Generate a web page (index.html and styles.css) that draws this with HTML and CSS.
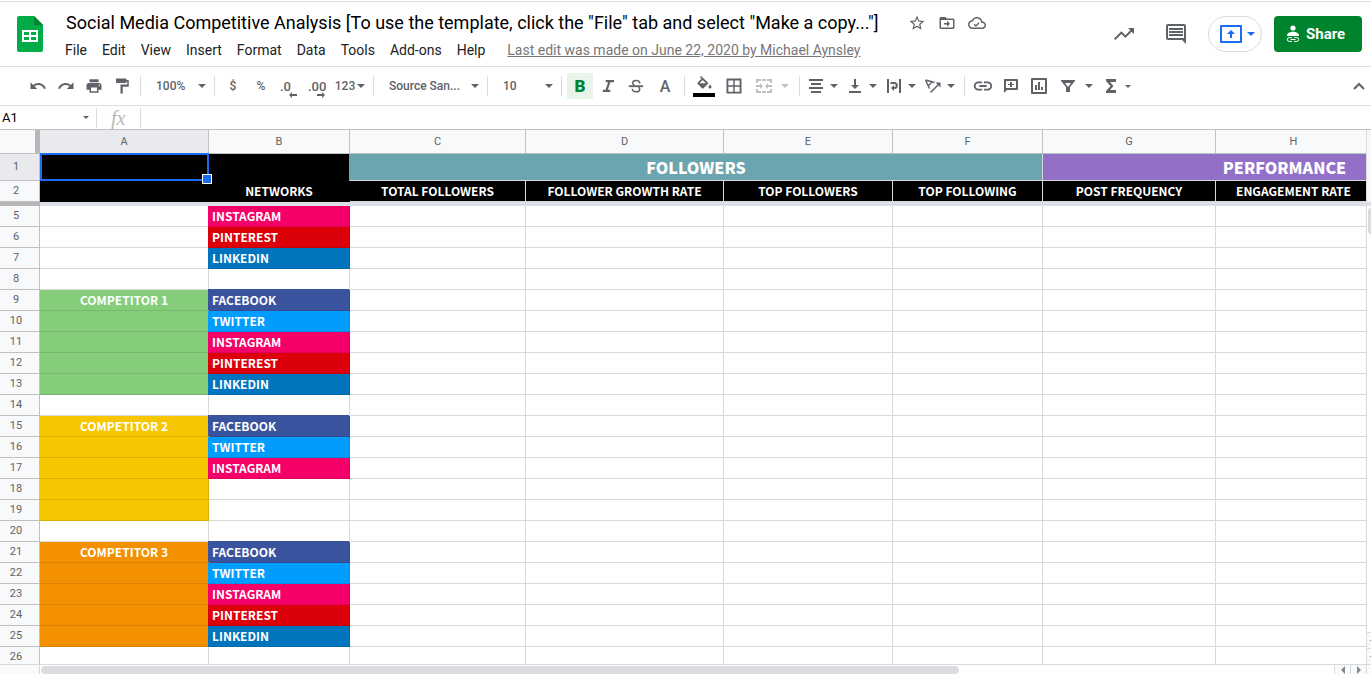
FILE: index.html
```html
<!DOCTYPE html>
<html lang="en">
<head>
    <meta charset="UTF-8">
    <meta name="viewport" content="width=device-width, initial-scale=1.0">
    <title>Social Media Competitive Analysis</title>
    <link rel="stylesheet" href="styles.css">
</head>
<body>
    <header class="header">
        <a class="logo" href="#" aria-label="Sheets home">
            <svg width="26" height="36" viewBox="0 0 26 36">
                <path fill="#00ac47" d="M2 0h15l9 9v25a2 2 0 0 1-2 2H2a2 2 0 0 1-2-2V2a2 2 0 0 1 2-2z"/>
                <path fill="#00832d" d="M17 0l9 9h-9z"/>
                <path fill="#fff" fill-rule="evenodd" d="M5 14h16v12H5zM7 16v3h5v-3zM14 16v3h5v-3zM7 21v3h5v-3zM14 21v3h5v-3z"/>
            </svg>
        </a>
        <div class="titles">
            <div class="title-row">
                <h1>Social Media Competitive Analysis [To use the template, click the "File" tab and select "Make a copy..."]</h1>
                <button class="doc-btn" aria-label="Star">
                    <svg width="18" height="18" viewBox="0 0 24 24"><path d="M22 9.24l-7.19-.62L12 2 9.19 8.63 2 9.24l5.46 4.73L5.82 21 12 17.27 18.18 21l-1.63-7.03L22 9.24zM12 15.4l-3.76 2.27 1-4.28-3.32-2.88 4.38-.38L12 6.1l1.71 4.04 4.38.38-3.32 2.88 1 4.28L12 15.4z"/></svg>
                </button>
                <button class="doc-btn" aria-label="Move">
                    <svg width="18" height="18" viewBox="0 0 24 24"><path d="M20 6h-8l-2-2H4c-1.1 0-2 .9-2 2v12c0 1.1.9 2 2 2h16c1.1 0 2-.9 2-2V8c0-1.1-.9-2-2-2zm0 12H4V8h16v10zm-8-1l4-4-4-4v3H8v2h4z"/></svg>
                </button>
                <button class="doc-btn" aria-label="Saved to Drive">
                    <svg width="18" height="18" viewBox="0 0 24 24"><path d="M19.35 10.04C18.67 6.59 15.64 4 12 4 9.11 4 6.6 5.64 5.35 8.04 2.34 8.36 0 10.91 0 14c0 3.31 2.69 6 6 6h13c2.76 0 5-2.24 5-5 0-2.64-2.05-4.78-4.65-4.96zM19 18H6c-2.21 0-4-1.79-4-4s1.79-4 4-4h.71C7.37 7.69 9.48 6 12 6c3.04 0 5.5 2.46 5.5 5.5v.5H19c1.66 0 3 1.34 3 3s-1.34 3-3 3zm-8.5-3.4l-1.6-1.6-1.3 1.3 2.9 2.9 4.9-4.9-1.3-1.3z"/></svg>
                </button>
            </div>
            <nav class="menu">
                <button>File</button>
                <button>Edit</button>
                <button>View</button>
                <button>Insert</button>
                <button>Format</button>
                <button>Data</button>
                <button>Tools</button>
                <button>Add-ons</button>
                <button>Help</button>
                <a class="last-edit" href="#">Last edit was made on June 22, 2020 by Michael Aynsley</a>
            </nav>
        </div>
        <div class="actions">
            <button class="action-btn" aria-label="Activity">
                <svg width="24" height="24" viewBox="0 0 24 24"><path d="M16 6l2.29 2.29-4.88 4.88-4-4L2 16.59 3.41 18l6-6 4 4 6.3-6.29L22 12V6z"/></svg>
            </button>
            <button class="action-btn" aria-label="Comments">
                <svg width="24" height="24" viewBox="0 0 24 24"><path fill-rule="evenodd" d="M22 4c0-1.1-.9-2-2-2H4c-1.1 0-2 .9-2 2v12c0 1.1.9 2 2 2h14l4 4V4zM20 16H4V4h16zM5 12h14v2H5zM5 9h14v2H5zM5 6h14v2H5z"/></svg>
            </button>
            <button class="present" aria-label="Present">
                <svg width="22" height="18" viewBox="0 0 22 18"><path fill-rule="evenodd" d="M0 1a1 1 0 0 1 1-1h20a1 1 0 0 1 1 1v16a1 1 0 0 1-1 1H1a1 1 0 0 1-1-1zM2 2v14h18V2zM10 13V9H7l4-4 4 4h-3v4z"/></svg>
                <span class="caret"></span>
            </button>
            <button class="share">
                <svg width="14" height="18" viewBox="0 0 14 18"><circle cx="7" cy="3" r="2.6"/><path d="M1 11c0-3 3-4.3 6-4.3s6 1.3 6 4.3z"/><path class="line" d="M6 12.6H3.2a1.9 1.9 0 0 0 0 3.8H6M8 12.6h2.8a1.9 1.9 0 0 1 0 3.8H8M4.5 14.5h5"/></svg>
                Share
            </button>
        </div>
    </header>

    <div class="toolbar">
        <button aria-label="Undo"><svg width="18" height="18" viewBox="0 0 24 24"><path d="M12.5 8c-2.65 0-5.05.99-6.9 2.6L2 7v9h9l-3.62-3.62c1.39-1.16 3.16-1.88 5.12-1.88 3.54 0 6.55 2.31 7.6 5.5l2.37-.78C21.08 11.03 17.15 8 12.5 8z"/></svg></button>
        <button aria-label="Redo"><svg width="18" height="18" viewBox="0 0 24 24"><path d="M18.4 10.6C16.55 8.99 14.15 8 11.5 8c-4.65 0-8.58 3.03-9.96 7.22L3.9 16c1.05-3.19 4.05-5.5 7.6-5.5 1.95 0 3.73.72 5.12 1.88L13 16h9V7l-3.6 3.6z"/></svg></button>
        <button aria-label="Print"><svg width="18" height="18" viewBox="0 0 24 24"><path d="M19 8H5c-1.66 0-3 1.34-3 3v6h4v4h12v-4h4v-6c0-1.66-1.34-3-3-3zm-3 11H8v-5h8v5zm3-7c-.55 0-1-.45-1-1s.45-1 1-1 1 .45 1 1-.45 1-1 1zm-1-9H6v4h12V3z"/></svg></button>
        <button aria-label="Paint format"><svg width="18" height="18" viewBox="0 0 24 24"><path d="M18 4V3c0-.55-.45-1-1-1H5c-.55 0-1 .45-1 1v4c0 .55.45 1 1 1h12c.55 0 1-.45 1-1V6h1v4H10v12h3v-9h8V4h-3z"/></svg></button>
        <span class="sep"></span>
        <span class="picker"><select aria-label="Zoom"><option>100%</option></select><span class="caret"></span></span>
        <span class="sep"></span>
        <button aria-label="Currency">$</button>
        <button aria-label="Percent">%</button>
        <button class="decimal" aria-label="Decrease decimal places">.0<svg width="8" height="6" viewBox="0 0 8 6"><path d="M0 3l3-3v2h5v2H3v2z"/></svg></button>
        <button class="decimal" aria-label="Increase decimal places">.00<svg width="8" height="6" viewBox="0 0 8 6"><path d="M8 3L5 0v2H0v2h5v2z"/></svg></button>
        <button class="number-format">123<span class="caret"></span></button>
        <span class="sep"></span>
        <span class="picker font"><select aria-label="Font"><option>Source San...</option></select><span class="caret"></span></span>
        <span class="sep"></span>
        <span class="picker"><select aria-label="Font size"><option>10</option></select><span class="caret"></span></span>
        <span class="sep"></span>
        <button class="bold" aria-label="Bold">B</button>
        <button aria-label="Italic"><svg width="18" height="18" viewBox="0 0 24 24"><path d="M9 4v3h3.2L8.8 17H5v3h10v-3h-3.2l3.4-10H20V4z"/></svg></button>
        <button aria-label="Strikethrough"><svg width="18" height="18" viewBox="0 0 24 24"><path d="M2.5 11h19v2.5h-19z"/><path class="thick" d="M17 8.5C17 6 15 4.5 12.3 4.5S7.5 5.8 7.5 8c0 1.5 1 2.5 2.5 3M15 13.5c1.5.7 2 1.5 2 2.7 0 2.2-2 3.5-4.6 3.5S7 18.4 7 15.8"/></svg></button>
        <button class="text-color" aria-label="Text color">A</button>
        <span class="sep"></span>
        <button class="fill-color" aria-label="Fill color"><svg width="22" height="22" viewBox="0 0 22 22"><path fill-rule="evenodd" d="M8 1l6.8 6.5a1 1 0 0 1 0 1.5l-4.3 4.3a1 1 0 0 1-1.5 0L4.7 9a1 1 0 0 1 0-1.5L8.5 3.7 7 2.2zM9.7 5L6.5 8.2h6.3z"/><path d="M17 9.5s1.5 1.7 1.5 2.6a1.5 1.5 0 0 1-3 0c0-.9 1.5-2.6 1.5-2.6z"/><path fill="#000" d="M0 18h22v4H0z"/></svg></button>
        <button class="wide" aria-label="Borders"><svg width="18" height="18" viewBox="0 0 24 24"><path fill-rule="evenodd" d="M2 2v20h20V2H2zM11 19.5H4.5V13H11zM11 11H4.5V4.5H11zM19.5 19.5H13V13h6.5zM19.5 11H13V4.5h6.5z"/></svg></button>
        <button class="drop spaced" aria-label="Merge cells" disabled><svg width="18" height="18" viewBox="0 0 18 18"><path d="M1 2h5v2H3v2H1zM7 2h4v2H7zM12 2h5v4h-2V4h-3zM1 12h2v2h3v2H1zM7 14h4v2H7zM15 12h2v4h-5v-2h3zM1 8h4V6l3 3-3 3v-2H1zM17 8h-4V6l-3 3 3 3v-2h4z"/></svg><span class="caret"></span></button>
        <span class="sep"></span>
        <button class="drop" aria-label="Horizontal align"><svg width="18" height="18" viewBox="0 0 18 18"><path d="M2 2h14v2H2zM4 6h10v2H4zM2 10h14v2H2zM4 14h10v2H4z"/></svg><span class="caret"></span></button>
        <button class="drop" aria-label="Vertical align"><svg width="18" height="18" viewBox="0 0 18 18"><path d="M8 2h2v6h3l-4 4-4-4h3zM3 14h12v2H3z"/></svg><span class="caret"></span></button>
        <button class="drop" aria-label="Text wrapping"><svg width="18" height="18" viewBox="0 0 18 18"><path d="M2 2h2v14H2zM14 2h2v14h-2zM9 8v6l-3-3z"/><path class="thick" d="M5.5 6h3.8a2.5 2.5 0 0 1 0 5H8"/></svg><span class="caret"></span></button>
        <button class="drop" aria-label="Text rotation"><svg width="18" height="18" viewBox="0 0 18 18"><path class="stroke" d="M1.5 3l9 2.500M1.5 3l4 8.5M4 9l4.5-4.5M6.5 15.5l8-8"/><path d="M11.5 5.5h5v5z"/></svg><span class="caret"></span></button>
        <span class="sep"></span>
        <button aria-label="Insert link"><svg width="22" height="22" viewBox="0 0 24 24"><path d="M3.9 12c0-1.71 1.39-3.1 3.1-3.1h4V7H7c-2.76 0-5 2.24-5 5s2.24 5 5 5h4v-1.9H7c-1.71 0-3.1-1.39-3.1-3.1zM8 13h8v-2H8v2zm9-6h-4v1.9h4c1.71 0 3.1 1.39 3.1 3.1s-1.39 3.1-3.1 3.1h-4V17h4c2.76 0 5-2.24 5-5s-2.24-5-5-5z"/></svg></button>
        <button aria-label="Insert comment"><svg width="18" height="18" viewBox="0 0 18 18"><path fill-rule="evenodd" d="M2 2h13a1 1 0 0 1 1 1v9a1 1 0 0 1-1 1H5l-3 3zM4 4v7h10V4zM8 5h2v2h2v1h-2v2H8V8H6V7h2z"/></svg></button>
        <button aria-label="Insert chart"><svg width="18" height="18" viewBox="0 0 18 18"><path fill-rule="evenodd" d="M2 1h14a1 1 0 0 1 1 1v14a1 1 0 0 1-1 1H2a1 1 0 0 1-1-1V2a1 1 0 0 1 1-1zM3 3v12h12V3zM5 8h2v5H5zM8 5h2v8H8zM11 10h2v3h-2z"/></svg></button>
        <button class="drop spaced" aria-label="Filter"><svg width="18" height="18" viewBox="0 0 18 18"><path fill-rule="evenodd" d="M2 3h14v1l-5 6v5H7v-5L2 4zM6 6l3 4 3-4z"/></svg><span class="caret"></span></button>
        <button class="drop" aria-label="Functions"><svg width="18" height="18" viewBox="0 0 18 18"><path d="M4 2h10v3H8l3.5 4L8 13h6v3H4v-2l4.500-5L4 4z"/></svg><span class="caret small"></span></button>
        <button class="collapse" aria-label="Hide the menus"><svg width="18" height="18" viewBox="0 0 18 18"><path class="thick" d="M4 12l5-5 5 5"/></svg></button>
    </div>

    <div class="formula-bar">
        <input class="name-box" aria-label="Name box" value="A1">
        <span class="caret small"></span>
        <span class="sep"></span>
        <label class="fx" for="formula">fx</label>
        <span class="sep"></span>
        <input id="formula" class="formula">
    </div>

    <main class="sheet">
        <div class="grid">
            <table>
                <colgroup>
                    <col class="col-rows">
                    <col class="col-a">
                    <col class="col-b">
                    <col class="col-c">
                    <col class="col-d">
                    <col class="col-e">
                    <col class="col-f">
                    <col class="col-g">
                    <col class="col-h">
                    <col class="col-i">
                </colgroup>
                <thead>
                    <tr class="letters"><th class="corner"></th><th class="active">A</th><th>B</th><th>C</th><th>D</th><th>E</th><th>F</th><th>G</th><th>H</th><th></th></tr>
                </thead>
                <tbody>
                    <tr class="groups"><th class="active">1</th><td class="black selected"><span class="selection"></span></td><td class="black"></td><td class="followers" colspan="4">FOLLOWERS</td><td class="performance" colspan="3">PERFORMANCE</td></tr>
                    <tr class="headings"><th>2</th><td class="black"></td><td class="black">NETWORKS</td><td>TOTAL FOLLOWERS</td><td>FOLLOWER GROWTH RATE</td><td>TOP FOLLOWERS</td><td>TOP FOLLOWING</td><td>POST FREQUENCY</td><td>ENGAGEMENT RATE</td><td></td></tr>
                    <tr class="freeze"><th></th><td colspan="9"></td></tr>
                    <tr><th>5</th><td></td><td class="instagram">INSTAGRAM</td><td></td><td></td><td></td><td></td><td></td><td></td><td></td></tr>
                    <tr><th>6</th><td></td><td class="pinterest">PINTEREST</td><td></td><td></td><td></td><td></td><td></td><td></td><td></td></tr>
                    <tr><th>7</th><td></td><td class="linkedin">LINKEDIN</td><td></td><td></td><td></td><td></td><td></td><td></td><td></td></tr>
                    <tr><th>8</th><td></td><td></td><td></td><td></td><td></td><td></td><td></td><td></td><td></td></tr>
                    <tr><th>9</th><td class="green">COMPETITOR 1</td><td class="facebook">FACEBOOK</td><td></td><td></td><td></td><td></td><td></td><td></td><td></td></tr>
                    <tr><th>10</th><td class="green"></td><td class="twitter">TWITTER</td><td></td><td></td><td></td><td></td><td></td><td></td><td></td></tr>
                    <tr><th>11</th><td class="green"></td><td class="instagram">INSTAGRAM</td><td></td><td></td><td></td><td></td><td></td><td></td><td></td></tr>
                    <tr><th>12</th><td class="green"></td><td class="pinterest">PINTEREST</td><td></td><td></td><td></td><td></td><td></td><td></td><td></td></tr>
                    <tr><th>13</th><td class="green"></td><td class="linkedin">LINKEDIN</td><td></td><td></td><td></td><td></td><td></td><td></td><td></td></tr>
                    <tr><th>14</th><td></td><td></td><td></td><td></td><td></td><td></td><td></td><td></td><td></td></tr>
                    <tr><th>15</th><td class="yellow">COMPETITOR 2</td><td class="facebook">FACEBOOK</td><td></td><td></td><td></td><td></td><td></td><td></td><td></td></tr>
                    <tr><th>16</th><td class="yellow"></td><td class="twitter">TWITTER</td><td></td><td></td><td></td><td></td><td></td><td></td><td></td></tr>
                    <tr><th>17</th><td class="yellow"></td><td class="instagram">INSTAGRAM</td><td></td><td></td><td></td><td></td><td></td><td></td><td></td></tr>
                    <tr><th>18</th><td class="yellow"></td><td></td><td></td><td></td><td></td><td></td><td></td><td></td><td></td></tr>
                    <tr><th>19</th><td class="yellow"></td><td></td><td></td><td></td><td></td><td></td><td></td><td></td><td></td></tr>
                    <tr><th>20</th><td></td><td></td><td></td><td></td><td></td><td></td><td></td><td></td><td></td></tr>
                    <tr><th>21</th><td class="orange">COMPETITOR 3</td><td class="facebook">FACEBOOK</td><td></td><td></td><td></td><td></td><td></td><td></td><td></td></tr>
                    <tr><th>22</th><td class="orange"></td><td class="twitter">TWITTER</td><td></td><td></td><td></td><td></td><td></td><td></td><td></td></tr>
                    <tr><th>23</th><td class="orange"></td><td class="instagram">INSTAGRAM</td><td></td><td></td><td></td><td></td><td></td><td></td><td></td></tr>
                    <tr><th>24</th><td class="orange"></td><td class="pinterest">PINTEREST</td><td></td><td></td><td></td><td></td><td></td><td></td><td></td></tr>
                    <tr><th>25</th><td class="orange"></td><td class="linkedin">LINKEDIN</td><td></td><td></td><td></td><td></td><td></td><td></td><td></td></tr>
                    <tr><th>26</th><td></td><td></td><td></td><td></td><td></td><td></td><td></td><td></td><td></td></tr>
                </tbody>
            </table>
        </div>
        <div class="vscroll">
            <div class="vscroll-top"></div>
            <div class="vscroll-track"><div class="vscroll-thumb"></div></div>
            <button aria-label="Scroll up"><span></span></button>
            <button aria-label="Scroll down"><span></span></button>
        </div>
        <div class="hscroll">
            <div class="hscroll-corner"></div>
            <div class="hscroll-track"><div class="hscroll-thumb"></div></div>
            <button aria-label="Scroll left"><svg width="4" height="8" viewBox="0 0 4 8"><path d="M4 0v8L0 4z"/></svg></button>
            <button aria-label="Scroll right"><svg width="4" height="8" viewBox="0 0 4 8"><path d="M0 0v8l4-4z"/></svg></button>
        </div>
        <div class="scroll-end"></div>
    </main>
</body>
</html>
```
FILE: styles.css
```css
* {
    box-sizing: border-box;
}

body {
    margin: 0;
    height: 100vh;
    display: flex;
    flex-direction: column;
    overflow: hidden;
    background-color: white;
    color: #000;
    font-family: Roboto, Arial, sans-serif;
}

button, select, input {
    margin: 0;
    padding: 0;
    border: none;
    background: none;
    font: inherit;
    color: inherit;
}

button {
    cursor: pointer;
}

svg {
    display: block;
    flex: none;
    fill: currentColor;
}

.stroke, .thick, .line {
    fill: none;
    stroke: currentColor;
    stroke-width: 1.5;
}

.thick {
    stroke-width: 2;
}

.line {
    stroke-width: 1;
}

.caret {
    width: 8px;
    border: 4px solid transparent;
    border-top-color: currentColor;
    border-bottom: none;
    pointer-events: none;
}

.caret.small {
    width: 6px;
    border-width: 3px;
    border-bottom: none;
}

/* header */
.header {
    display: flex;
    height: 66px;
    margin-top: 1px;
    padding: 0 9px 0 17px;
    border-top: 1px solid #dadce0;
    border-bottom: 1px solid #dadce0;
}

.logo {
    margin-top: 14px;
}

.titles {
    flex: 1;
    min-width: 0;
    padding: 8px 0 0 15px;
}

.title-row {
    display: flex;
    align-items: center;
    height: 26px;
}

.title-row h1 {
    margin: 0 24px 0 8px;
    font-size: 18px;
    font-weight: 400;
    line-height: 26px;
    white-space: nowrap;
}

.doc-btn {
    display: flex;
    justify-content: center;
    width: 30px;
    color: #5f6368;
}

.menu {
    display: flex;
    align-items: center;
    gap: 1px;
    height: 28px;
    font-size: 14px;
    color: #202124;
    white-space: nowrap;
}

.menu button {
    padding: 0 7px;
}

.last-edit {
    margin-left: 14px;
    color: #777;
}

.actions {
    display: flex;
    align-items: center;
    gap: 12px;
    height: 64px;
}

.action-btn {
    display: flex;
    justify-content: center;
    width: 40px;
    color: #5f6368;
}

.present {
    display: flex;
    align-items: center;
    gap: 5px;
    height: 36px;
    padding: 0 6px 0 11px;
    border: 1px solid #dadce0;
    border-radius: 18px;
    color: #1a6cf0;
}

.share {
    display: flex;
    align-items: center;
    gap: 6px;
    width: 88px;
    height: 36px;
    padding-left: 12px;
    border-radius: 4px;
    background-color: #00832d;
    color: white;
    font-size: 15px;
    font-weight: 700;
}

/* toolbar */
.toolbar {
    display: flex;
    align-items: center;
    height: 39px;
    padding-left: 24px;
    border-bottom: 1px solid #dadce0;
    color: #5f6368;
    font-size: 12px;
    font-weight: 500;
}

.toolbar button {
    display: flex;
    align-items: center;
    justify-content: center;
    flex: none;
    width: 28px;
    height: 26px;
}

.toolbar button:disabled {
    color: #bdc1c6;
}

.toolbar .sep {
    flex: none;
    width: 1px;
    height: 20px;
    margin: 0 4px;
    background-color: #dadce0;
}

.picker {
    display: flex;
    align-items: center;
    width: 65px;
    padding-right: 4px;
}

.picker select {
    flex: 1;
    min-width: 0;
    padding-left: 11px;
    appearance: none;
}

.picker.font {
    width: 105px;
}

.toolbar .decimal {
    flex-direction: column;
    align-items: flex-start;
    padding: 4px 0 0 5px;
    font-size: 13px;
    line-height: 16px;
}

.decimal svg {
    align-self: flex-end;
    margin-top: -3px;
    margin-right: 6px;
}

.toolbar .number-format {
    gap: 2px;
    width: 38px;
}

.toolbar .bold {
    width: 26px;
    margin: 0 1px;
    border-radius: 2px;
    background-color: #e6f4ea;
    color: #00832d;
    font-size: 17px;
    font-weight: 900;
}

.toolbar .text-color {
    width: 30px;
    font-size: 16px;
}

.toolbar .fill-color, .toolbar .wide {
    width: 30px;
}

.toolbar .drop {
    justify-content: flex-start;
    gap: 5px;
    width: 39px;
    padding-left: 3px;
}

.toolbar .drop.spaced {
    gap: 8px;
    width: 46px;
    padding-left: 6px;
}

.toolbar .collapse {
    margin-left: auto;
    margin-right: -2px;
}

/* formula bar */
.formula-bar {
    display: flex;
    align-items: center;
    height: 24px;
    border-bottom: 1px solid #c0c0c0;
    color: #5f6368;
}

.name-box {
    width: 83px;
    padding-left: 2px;
    color: #000;
    font-size: 13px;
}

.formula-bar .sep {
    width: 1px;
    height: 20px;
    margin-left: 7px;
    background-color: #dadce0;
}

.fx {
    width: 36px;
    padding-left: 14px;
    color: #b7b7b7;
    font-family: "Liberation Serif", serif;
    font-size: 20px;
    font-style: italic;
    line-height: 22px;
}

.formula {
    flex: 1;
    padding: 0 6px;
    font-size: 13px;
}

/* sheet */
.sheet {
    flex: 1;
    min-height: 0;
    display: grid;
    grid-template-columns: minmax(0, 1fr) 5px;
    grid-template-rows: minmax(0, 1fr) 10px;
}

.grid {
    overflow: hidden;
}

table {
    width: 1527px;
    table-layout: fixed;
    border-collapse: separate;
    border-spacing: 0;
}

.col-rows { width: 40px; }
.col-a { width: 169px; }
.col-b { width: 141px; }
.col-c { width: 176px; }
.col-d { width: 198px; }
.col-e { width: 169px; }
.col-f { width: 150px; }
.col-g { width: 173px; }
.col-h { width: 156px; }
.col-i { width: 155px; }

th, td {
    height: 21px;
    padding: 0;
    border-right: 1px solid #d9d9d9;
    border-bottom: 1px solid #d9d9d9;
    white-space: nowrap;
}

th {
    border-color: #c0c0c0;
    padding-right: 7px;
    background-color: #f8f9fa;
    color: #5f6368;
    font-size: 11px;
    font-weight: 400;
    line-height: 12px;
}

td {
    color: white;
    font-family: "Noto Sans CJK SC", "Source Sans Pro", sans-serif;
    font-size: 12px;
    font-weight: 700;
    line-height: 20px;
}

th.active {
    background-color: #e8eaed;
}

.letters th {
    height: 24px;
    padding: 0;
}

.letters .corner {
    border-right: 5px solid #b7b7b7;
}

.groups th, .groups td {
    height: 27px;
}

.groups td {
    font-size: 16px;
    font-weight: 900;
    line-height: 26px;
    text-align: center;
}

.headings td {
    background-color: #000;
    text-align: center;
}

td.black {
    background-color: #000;
    border-color: #000;
}

td.followers {
    background-color: #6aa5b0;
    box-shadow: -1px 0 #6aa5b0;
}

.performance {
    background-color: #9370c8;
}

.freeze th, .freeze td {
    height: 4px;
    border: none;
    background-color: #dadfe8;
    line-height: 0;
}

.freeze th {
    background-color: #b7b7b7;
}

/* active cell outline, drawn over the neighbouring borders */
.selected {
    position: relative;
}

.selection {
    position: absolute;
    z-index: 1;
    inset: -1px -1px -1px 0;
    border: 2px solid #1a6cf0;
}

.selection::after {
    content: "";
    position: absolute;
    right: -5px;
    bottom: -5px;
    width: 8px;
    height: 8px;
    border: 1px solid white;
    background-color: #1a6cf0;
}

.facebook, .twitter, .instagram, .pinterest, .linkedin {
    padding-left: 3px;
}

.facebook {
    background-color: #39539e;
    border-color: #344b90;
    box-shadow: -1px -1px #39539e;
}

.twitter {
    background-color: #009dff;
    border-color: #008ee6;
    box-shadow: -1px 0 #009dff;
}

.instagram {
    background-color: #f50068;
    border-color: #dd005e;
    box-shadow: -1px 0 #f50068;
}

.pinterest {
    background-color: #db000a;
    border-color: #c50009;
    box-shadow: -1px 0 #db000a;
}

.linkedin {
    background-color: #0074bd;
    border-color: #0068aa;
    box-shadow: -1px 0 #0074bd;
}

.green, .yellow, .orange {
    text-align: center;
}

.green {
    background-color: #85cd7a;
    border-color: #78b86e;
}

.yellow {
    background-color: #f7c600;
    border-color: #deb200;
}

.orange {
    background-color: #f39000;
    border-color: #da8200;
}

/* scrollbars */
.vscroll {
    display: flex;
    flex-direction: column;
    overflow: hidden;
    border-left: 1px solid #d9d9d9;
}

.vscroll-top {
    height: 76px;
    border-bottom: 4px solid #dadfe8;
    background-color: #f8f9fa;
}

.vscroll-track {
    flex: 1;
    padding: 2px 0 0 1px;
}

.vscroll-thumb {
    height: 26px;
    border-radius: 4px 0 0 4px;
    background-color: #dadce0;
}

.vscroll button {
    height: 16px;
    border-top: 1px solid #d9d9d9;
    background-color: #f8f9fa;
}

.vscroll button span {
    display: block;
    width: 1px;
    height: 1px;
    margin-left: auto;
    background-color: #80868b;
}

.hscroll {
    display: flex;
    border-top: 1px solid #d9d9d9;
}

.hscroll-corner {
    width: 40px;
    border-right: 1px solid #d9d9d9;
    background-color: #f8f9fa;
}

.hscroll-track {
    flex: 1;
    padding: 1px 0 0 1px;
}

.hscroll-thumb {
    width: 71%;
    height: 8px;
    border-radius: 4px;
    background-color: #dadce0;
}

.hscroll button {
    display: flex;
    align-items: center;
    justify-content: center;
    width: 16px;
    border-left: 1px solid #d9d9d9;
    background-color: #f8f9fa;
    color: #80868b;
}

.scroll-end {
    border-top: 1px solid #d9d9d9;
    border-left: 1px solid #d9d9d9;
    background-color: #f8f9fa;
}
```
